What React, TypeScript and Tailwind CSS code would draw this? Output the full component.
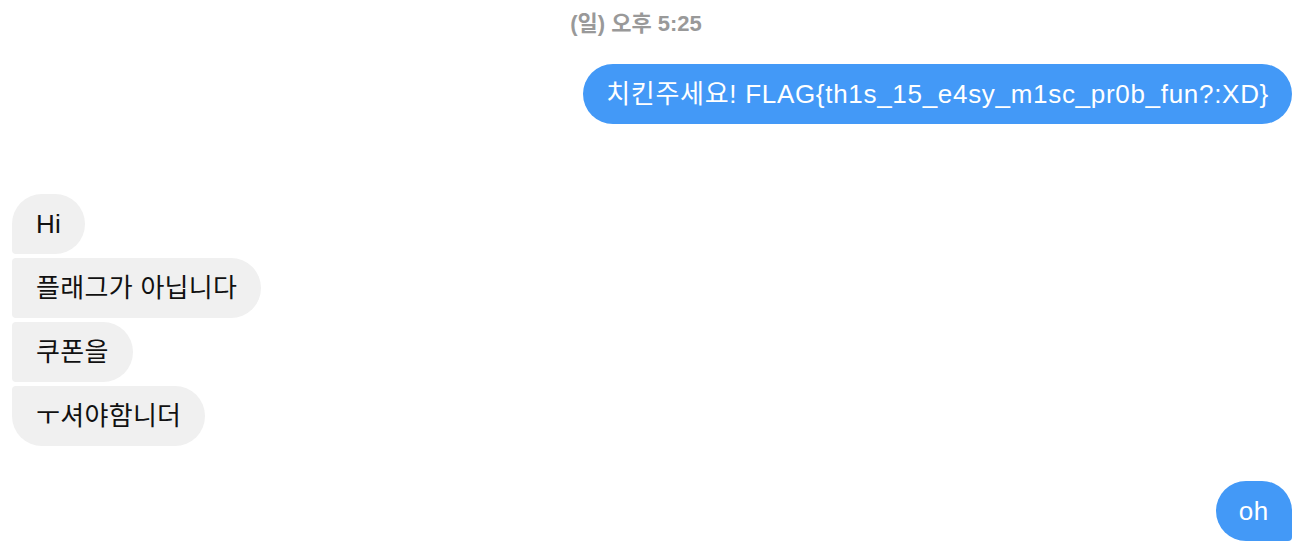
import React from "react";

const font = { fontFamily: '"Liberation Sans", "Noto Sans CJK KR", sans-serif' };

const Mine = ({ text, className }: { text: string; className: string }) => (
  <div className="flex justify-end">
    <div className={`h-[60px] flex items-center px-[23px] bg-[#4399f7] text-white text-[26px] tracking-[0.7px] ${className}`}>
      {text}
    </div>
  </div>
);

const Theirs = ({ text, className }: { text: string; className: string }) => (
  <div className="flex justify-start">
    <div className={`h-[60px] flex items-center px-[24px] bg-[#f0f0f0] text-[#111] text-[26px] tracking-[0.3px] ${className}`}>
      {text}
    </div>
  </div>
);

const App = () => {
  return (
    <div className="w-[1302px] h-[544px] bg-white px-[10px] overflow-hidden" style={font}>
      <div className="h-[46px] flex items-center justify-center pr-[30px] text-[22px] font-bold text-[#999]">
        (일) 오후 5:25
      </div>
      <div className="mt-[18px]">
        <Mine text="치킨주세요! FLAG{th1s_15_e4sy_m1sc_pr0b_fun?:XD}" className="rounded-[30px]" />
      </div>
      <div className="mt-[70px] flex flex-col gap-[4px] pl-[2px]">
        <Theirs text="Hi" className="rounded-[30px] rounded-bl-[4px]" />
        <Theirs text="플래그가 아닙니다" className="rounded-r-[30px] rounded-l-[4px]" />
        <Theirs text="쿠폰을" className="rounded-r-[30px] rounded-l-[4px]" />
        <Theirs text="ㅜ셔야함니더" className="rounded-[30px] rounded-tl-[4px]" />
      </div>
      <div className="mt-[35px]">
        <Mine text="oh" className="rounded-[30px] rounded-br-[4px]" />
      </div>
    </div>
  );
};

export default App;
